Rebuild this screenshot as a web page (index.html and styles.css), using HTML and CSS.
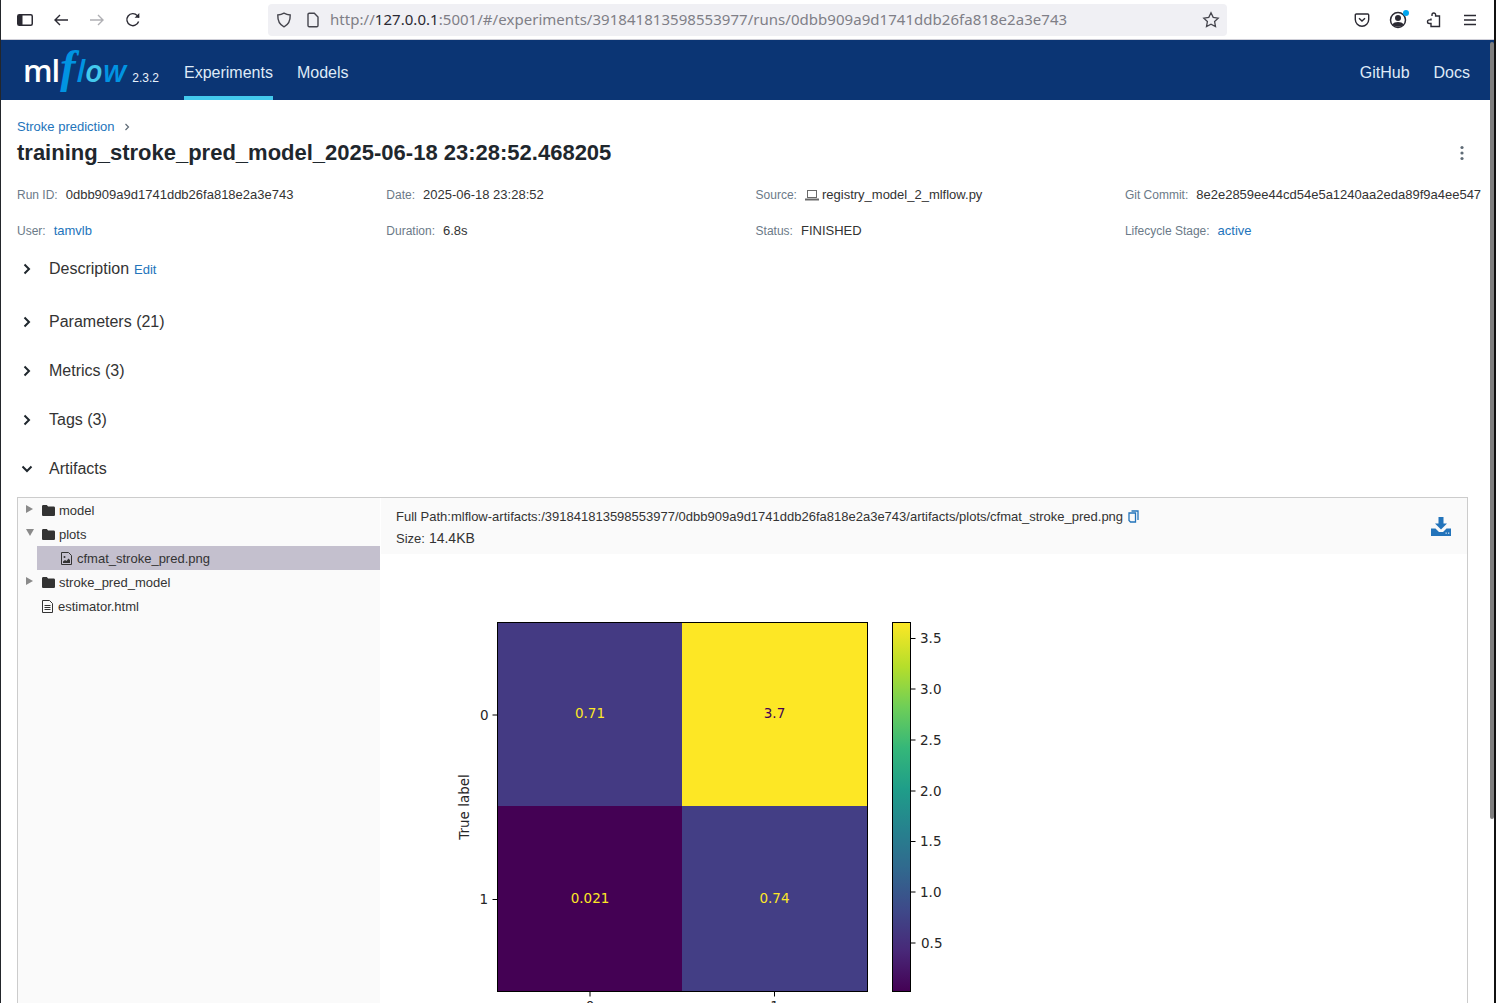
FILE: index.html
```html
<!DOCTYPE html>
<html lang="en">
  <head>
    <meta charset="UTF-8" />
    <title>MLflow</title>
    <link rel="stylesheet" href="styles.css">
  </head>
  <body>
    <div class="browser-bar">
      <div class="tool-btn">
        <svg width="16" height="16" viewBox="0 0 16 16" fill="none" stroke="#2b2a33" stroke-width="1.5"><rect x="0.75" y="2.75" width="14.5" height="10.5" rx="1.5"/><rect x="1" y="3" width="4.5" height="10" fill="#2b2a33" stroke="none"/></svg>
      </div>
      <div class="tool-btn">
        <svg width="16" height="16" viewBox="0 0 16 16" fill="none" stroke="#2b2a33" stroke-width="1.4"><path d="M15 8H2M7 3L2 8l5 5"/></svg>
      </div>
      <div class="tool-btn">
        <svg width="16" height="16" viewBox="0 0 16 16" fill="none" stroke="#b0b0b4" stroke-width="1.4"><path d="M1 8h13M9 3l5 5-5 5"/></svg>
      </div>
      <div class="tool-btn">
        <svg width="16" height="16" viewBox="0 0 16 16" fill="none" stroke="#2b2a33" stroke-width="1.4"><path d="M13.6 9.5A6 6 0 1 1 12.3 3.6L14 5.4"/><path d="M14.3 1v4.7H9.6" stroke="none" fill="#2b2a33"/></svg>
      </div>

      <div class="url-bar">
        <svg class="url-icon" width="16" height="16" viewBox="0 0 16 16" fill="none" stroke="#45454d" stroke-width="1.4"><path d="M8 1.2c2 1.2 4 1.7 6.2 1.8.2 5.5-1.6 9.6-6.2 11.8C3.400 12.600 1.600 8.500 1.800 3 4 2.900 6 2.400 8 1.200z"/></svg>
        <svg class="url-icon page-icon" width="16" height="16" viewBox="0 0 16 16" fill="none" stroke="#45454d" stroke-width="1.4"><path d="M3 2.500c0-.8.500-1.300 1.300-1.300h5L13 5v8.500c0 .8-.500 1.300-1.300 1.300H4.300C3.500 14.800 3 14.300 3 13.500z"/></svg>
        <span class="url-text">http://<b>127.0.0.1</b>:5001/#/experiments/391841813598553977/runs/0dbb909a9d1741ddb26fa818e2a3e743</span>
        <svg class="star-icon" width="18" height="18" viewBox="0 0 18 18" fill="none" stroke="#45454d" stroke-width="1.3"><path d="M9 1.800l2.200 4.600 5 .7-3.600 3.500.9 5L9 13.200l-4.500 2.400.9-5L1.800 7.100l5-.7z"/></svg>
      </div>

      <div class="tool-right">
        <div class="tool-btn">
          <svg width="16" height="16" viewBox="0 0 16 16" fill="none" stroke="#2b2a33" stroke-width="1.4"><path d="M2.300 2h11.400c.6 0 1 .4 1 1v4.500a6.700 6.700 0 0 1-13.400 0V3c0-.6.400-1 1-1z"/><path d="M5 6.200l3 2.800 3-2.800"/></svg>
        </div>
        <div class="tool-btn account-btn">
          <svg width="18" height="18" viewBox="0 0 18 18" fill="none" stroke="#2b2a33" stroke-width="1.5"><circle cx="9" cy="9" r="7.500"/><circle cx="9" cy="7" r="3" fill="#2b2a33" stroke="none"/><path d="M3.500 13.500c1-1.800 3-2.500 5.500-2.500s4.500.7 5.500 2.500c-1.500 1.500-3.300 2.200-5.500 2.200s-4-.7-5.500-2.200z" fill="#2b2a33" stroke="none"/></svg>
          <span class="account-dot"></span>
        </div>
        <div class="tool-btn">
          <svg width="16" height="16" viewBox="0 0 16 16" fill="none" stroke="#2b2a33" stroke-width="1.4"><path d="M6.500 4V2.800a1.800 1.800 0 0 1 3.600 0V4H14v10.500H5.500v-3H3.800a1.800 1.800 0 0 1 0-3.600h1.700V6.500" transform="translate(-.5 0)"/></svg>
        </div>
        <div class="tool-btn">
          <svg width="16" height="16" viewBox="0 0 16 16" fill="none" stroke="#2b2a33" stroke-width="1.4"><path d="M2 3.500h12M2 8h12M2 12.500h12"/></svg>
        </div>
      </div>
    </div>

    <header class="nav">
      <div class="logo">
        <span class="logo-ml">ml</span><span class="logo-f">f</span><span class="logo-flow">l<i>o</i>w</span>
        <span class="logo-version">2.3.2</span>
      </div>
      <a class="nav-link active">Experiments</a>
      <a class="nav-link">Models</a>
      <div class="nav-right">
        <a class="nav-link">GitHub</a>
        <a class="nav-link">Docs</a>
      </div>
    </header>

    <main class="content">
      <div class="breadcrumb">
        <a class="link">Stroke prediction</a>
        <svg width="6" height="8" viewBox="0 0 6 8" fill="none" stroke="#5f6b76" stroke-width="1.200"><path d="M1.500 1l3 3-3 3"/></svg>
      </div>
      <div class="title-row">
        <h1>training_stroke_pred_model_2025-06-18 23:28:52.468205</h1>
        <svg class="kebab" width="4" height="16" viewBox="0 0 4 16" fill="#5f6b76"><circle cx="2" cy="2.500" r="1.600"/><circle cx="2" cy="8" r="1.600"/><circle cx="2" cy="13.500" r="1.600"/></svg>
      </div>

      <div class="meta-grid">
        <div class="meta-item"><span class="meta-label">Run ID:</span><span>0dbb909a9d1741ddb26fa818e2a3e743</span></div>
        <div class="meta-item"><span class="meta-label">Date:</span><span>2025-06-18 23:28:52</span></div>
        <div class="meta-item">
          <span class="meta-label">Source:</span>
          <svg class="source-icon" width="14" height="12" viewBox="0 0 14 12" fill="none" stroke="#6a6a6a"><rect x="2.500" y="1.500" width="9" height="7"/><path d="M0 10.500h14" stroke-width="2"/></svg>
          <span>registry_model_2_mlflow.py</span>
        </div>
        <div class="meta-item"><span class="meta-label">Git Commit:</span><span>8e2e2859ee44cd54e5a1240aa2eda89f9a4ee547</span></div>
        <div class="meta-item"><span class="meta-label">User:</span><a class="link">tamvlb</a></div>
        <div class="meta-item"><span class="meta-label">Duration:</span><span>6.8s</span></div>
        <div class="meta-item"><span class="meta-label">Status:</span><span>FINISHED</span></div>
        <div class="meta-item"><span class="meta-label">Lifecycle Stage:</span><a class="link">active</a></div>
      </div>

      <div class="section first-section">
        <svg class="chevron" width="8" height="12" viewBox="0 0 8 12" fill="none" stroke="#1f272d" stroke-width="2"><path d="M1.500 1.500L6 6l-4.500 4.500"/></svg>
        <span>Description</span><a class="link edit-link">Edit</a>
      </div>
      <div class="section">
        <svg class="chevron" width="8" height="12" viewBox="0 0 8 12" fill="none" stroke="#1f272d" stroke-width="2"><path d="M1.500 1.500L6 6l-4.500 4.500"/></svg>
        <span>Parameters (21)</span>
      </div>
      <div class="section">
        <svg class="chevron" width="8" height="12" viewBox="0 0 8 12" fill="none" stroke="#1f272d" stroke-width="2"><path d="M1.500 1.500L6 6l-4.500 4.500"/></svg>
        <span>Metrics (3)</span>
      </div>
      <div class="section">
        <svg class="chevron" width="8" height="12" viewBox="0 0 8 12" fill="none" stroke="#1f272d" stroke-width="2"><path d="M1.500 1.500L6 6l-4.500 4.500"/></svg>
        <span>Tags (3)</span>
      </div>
      <div class="section">
        <svg class="chevron chevron-open" width="12" height="8" viewBox="0 0 12 8" fill="none" stroke="#1f272d" stroke-width="2"><path d="M1.500 1.500L6 6l4.500-4.500"/></svg>
        <span>Artifacts</span>
      </div>

      <div class="artifacts">
        <div class="tree">
          <div class="tree-row">
            <span class="tree-arrow"></span>
            <svg class="folder" width="13" height="11" viewBox="0 0 13 11"><path d="M1.300 0h3.500l1.300 1.500h5.600c.7 0 1.300.6 1.300 1.300v6.900c0 .7-.6 1.300-1.300 1.300H1.300C.6 11 0 10.400 0 9.700V1.300C0 .6.600 0 1.300 0z" fill="#333"/></svg>
            <span>model</span>
          </div>
          <div class="tree-row">
            <span class="tree-arrow open"></span>
            <svg class="folder" width="13" height="11" viewBox="0 0 13 11"><path d="M1.300 0h3.500l1.300 1.500h5.600c.7 0 1.300.6 1.300 1.300v6.900c0 .7-.6 1.300-1.300 1.300H1.300C.6 11 0 10.400 0 9.700V1.300C0 .6.600 0 1.300 0z" fill="#333"/></svg>
            <span>plots</span>
          </div>
          <div class="tree-row selected">
            <svg class="file-icon" width="11" height="13" viewBox="0 0 11 13" fill="none" stroke="#333"><path d="M.5.500h7l3 3v9H.5z"/><circle cx="3.500" cy="5" r="1" fill="#333" stroke="none"/><path d="M2 11V9.500l2-1.500 1.500 1 2-2.500L9 8v3z" fill="#333" stroke="none"/></svg>
            <span>cfmat_stroke_pred.png</span>
          </div>
          <div class="tree-row">
            <span class="tree-arrow"></span>
            <svg class="folder" width="13" height="11" viewBox="0 0 13 11"><path d="M1.300 0h3.500l1.300 1.500h5.600c.7 0 1.300.6 1.300 1.300v6.900c0 .7-.6 1.300-1.300 1.300H1.300C.6 11 0 10.400 0 9.700V1.300C0 .6.600 0 1.300 0z" fill="#333"/></svg>
            <span>stroke_pred_model</span>
          </div>
          <div class="tree-row leaf">
            <svg class="file-icon" width="11" height="13" viewBox="0 0 11 13" fill="none" stroke="#333"><path d="M.5.500h7l3 3v9H.5z"/><path d="M2.500 5.500h6M2.500 7.500h6M2.500 9.500h6"/></svg>
            <span>estimator.html</span>
          </div>
        </div>

        <div class="viewer">
          <div class="viewer-head">
            <div class="viewer-info">
              <div class="full-path">
                Full Path:mlflow-artifacts:/391841813598553977/0dbb909a9d1741ddb26fa818e2a3e743/artifacts/plots/cfmat_stroke_pred.png
                <svg width="11" height="13" viewBox="0 0 11 13" fill="none" stroke="#2374bb" stroke-width="1.300"><path d="M3.500 1h6.500v9"/><path d="M1 3h6.500v9H2.500L1 10.500z"/></svg>
              </div>
              <div class="size-row">Size: <span class="size-value">14.4KB</span></div>
            </div>
            <svg class="download" width="20" height="19" viewBox="0 0 20 19" fill="#2374bb"><path d="M7.500 0h5v6.500H16l-6 6-6-6h3.500z"/><path d="M0 11.500h4.500L8 15h4l3.500-3.500H20V19H0z"/><rect x="14.500" y="15.500" width="1.300" height="1.300" fill="#cfe0f0"/><rect x="17" y="15.500" width="1.300" height="1.300" fill="#cfe0f0"/></svg>
          </div>

          <svg class="plot" width="520" height="393" viewBox="0 0 520 393">
            <defs>
              <linearGradient id="viridis" x1="0" y1="1" x2="0" y2="0">
                <stop offset="0" stop-color="#440154"/>
                <stop offset="0.11" stop-color="#482878"/>
                <stop offset="0.22" stop-color="#3e4989"/>
                <stop offset="0.33" stop-color="#31688e"/>
                <stop offset="0.44" stop-color="#26828e"/>
                <stop offset="0.55" stop-color="#1f9e89"/>
                <stop offset="0.66" stop-color="#35b779"/>
                <stop offset="0.77" stop-color="#6ece58"/>
                <stop offset="0.88" stop-color="#b5de2b"/>
                <stop offset="1" stop-color="#fde725"/>
              </linearGradient>
            </defs>

            <rect x="57.500" y="12.500" width="184.500" height="183.500" fill="#443a83"/>
            <rect x="242" y="12.500" width="185.500" height="183.500" fill="#fde725"/>
            <rect x="57.500" y="196" width="184.500" height="185.500" fill="#440154"/>
            <rect x="242" y="196" width="185.500" height="185.500" fill="#433e85"/>
            <rect x="57.500" y="12.500" width="370" height="369" fill="none" stroke="#000"/>

            <g class="plot-text" fill="#fde725" text-anchor="middle">
              <text x="150" y="108">0.71</text>
              <text x="334.500" y="108" fill="#440154">3.7</text>
              <text x="150" y="293">0.021</text>
              <text x="334.500" y="293">0.74</text>
            </g>

            <g stroke="#000">
              <path d="M52.500 105h5M52.500 289.500h5M150 381.500v5M334.500 381.500v5"/>
            </g>
            <g class="plot-text" fill="#262626" text-anchor="end">
              <text x="48.500" y="110">0</text>
              <text x="48" y="294">1</text>
            </g>
            <g class="plot-text" fill="#262626" text-anchor="middle">
              <text x="150" y="401">0</text>
              <text x="334.500" y="401">1</text>
              <text transform="translate(29 197) rotate(-90)">True label</text>
            </g>

            <rect x="452.500" y="12.500" width="18" height="369" fill="url(#viridis)" stroke="#000"/>
            <g stroke="#000">
              <path d="M470.500 28.500h5M470.500 79h5M470.500 130h5M470.500 181h5M470.500 231.500h5M470.500 282h5M470.500 333h5"/>
            </g>
            <g class="plot-text" fill="#262626">
              <text x="480" y="33">3.5</text>
              <text x="480" y="84">3.0</text>
              <text x="480" y="135">2.5</text>
              <text x="480" y="186">2.0</text>
              <text x="480" y="236">1.5</text>
              <text x="480" y="287">1.0</text>
              <text x="481" y="338">0.5</text>
            </g>
          </svg>
        </div>
      </div>
    </main>

    <div class="scroll-thumb"></div>
  </body>
</html>
```

FILE: styles.css
```css
* {
  box-sizing: border-box;
}

html,
body {
  height: 1003px;
  overflow: hidden;
}

body {
  margin: 0;
  background: #fff;
  border-left: 1px solid #23262b;
  border-right: 2px solid #111;
  font-family: "Liberation Sans", Arial, sans-serif;
  font-size: 13px;
  color: #333;
  position: relative;
}

.browser-bar {
  height: 40px;
  display: flex;
  align-items: center;
  padding-left: 6px;
  border-bottom: 1px solid #cfcfd8;
}

.tool-btn {
  width: 36px;
  height: 36px;
  display: flex;
  align-items: center;
  justify-content: center;
  position: relative;
}

.url-bar {
  width: 959px;
  height: 32px;
  margin-left: 117px;
  background: #f0f0f4;
  border-radius: 4px;
  display: flex;
  align-items: center;
  padding: 0 7px 0 8px;
}

.url-icon {
  flex: none;
}

.page-icon {
  margin-left: 13px;
}

.url-text {
  margin: -2px 0 0 9px;
  flex: 1;
  font-family: "Noto Sans", sans-serif;
  font-size: 15px;
  letter-spacing: 0.04px;
  color: #7f7f87;
  white-space: nowrap;
}

.url-text b {
  font-weight: 400;
  color: #2b2a33;
}

.tool-right {
  margin-left: auto;
  display: flex;
  padding-right: 6px;
}

.account-dot {
  position: absolute;
  top: 8px;
  right: 7px;
  width: 6px;
  height: 6px;
  border-radius: 50%;
  background: #00a7f0;
}

.nav {
  height: 60px;
  background: #0b3574;
  display: flex;
  align-items: stretch;
  padding: 0 24px 0 22px;
}

.logo {
  width: 161px;
  display: flex;
  align-items: baseline;
  padding-top: 5px;
  white-space: nowrap;
  line-height: 44px;
}

.logo-ml {
  font-family: "Open Sans", sans-serif;
  font-weight: 600;
  font-size: 31px;
  color: #fff;
  letter-spacing: -1px;
}

.logo-f {
  font-family: "Liberation Serif", serif;
  font-style: italic;
  font-weight: 700;
  font-size: 46px;
  color: #0194e2;
  margin-left: 1px;
}

.logo-flow {
  font-family: "Open Sans", sans-serif;
  font-style: italic;
  font-weight: 600;
  font-size: 31px;
  color: #0194e2;
  margin-left: 1px;
}

.logo-flow i {
  color: #43c9ed;
}

.logo-version {
  margin-left: 6px;
  font-size: 12px;
  color: #e7f1fb;
}

.nav-link {
  display: flex;
  align-items: center;
  font-size: 16px;
  color: #dfeaf7;
  margin-right: 24px;
  border-bottom: 4px solid transparent;
  padding-top: 10px;
}

.nav-link.active {
  border-bottom-color: #43c9ed;
}

.nav-right {
  margin-left: auto;
  display: flex;
}

.nav-right .nav-link:last-child {
  margin-right: 0;
}

.content {
  padding: 19px 0 0 16px;
}

.link {
  color: #2374bb;
}

.breadcrumb {
  display: flex;
  align-items: center;
  gap: 9px;
  height: 15px;
}

.title-row {
  display: flex;
  align-items: center;
  justify-content: space-between;
  padding-right: 30px;
  margin-top: 5px;
  height: 28px;
}

h1 {
  margin: 0;
  font-size: 22px;
  font-weight: 700;
  color: #1f272d;
}

.meta-grid {
  display: grid;
  grid-template-columns: repeat(4, 369.3px);
  grid-auto-rows: 36px;
  margin-top: 17px;
}

.meta-item {
  display: flex;
  align-items: baseline;
  height: 22px;
  line-height: 22px;
  white-space: nowrap;
}

.meta-label {
  font-size: 12px;
  color: #6b7a88;
  margin-right: 8px;
}

.source-icon {
  margin-right: 3px;
  align-self: center;
}

.section {
  display: flex;
  align-items: center;
  height: 24px;
  margin-top: 25px;
  font-size: 16px;
  color: #333;
}

.first-section {
  margin-top: 1px;
}

.section + .section {
  margin-top: 25px;
}

.first-section + .section {
  margin-top: 29px;
}

.chevron {
  margin-left: 6px;
  margin-right: 18px;
}

.chevron-open {
  margin-left: 4px;
  margin-right: 16px;
}

.edit-link {
  font-size: 13px;
  margin-left: 5px;
  padding-top: 1px;
}

.artifacts {
  display: flex;
  width: 1451px;
  height: 506px;
  margin-top: 16px;
  border: 1px solid #ccc;
  border-bottom: none;
}

.tree {
  width: 362px;
  flex: none;
  background: #fafafa;
}

.tree-row {
  height: 24px;
  display: flex;
  align-items: center;
  padding-left: 8px;
  white-space: nowrap;
}

.tree-arrow {
  width: 0;
  height: 0;
  margin-right: 8px;
  margin-top: -3px;
  border-left: 7px solid #8a8a8a;
  border-top: 4px solid transparent;
  border-bottom: 4px solid transparent;
}

.tree-arrow.open {
  margin-right: 7px;
  border-top: 7px solid #8a8a8a;
  border-left: 4px solid transparent;
  border-right: 4px solid transparent;
  border-bottom: none;
}

.folder {
  margin-left: 1px;
  margin-right: 4px;
}

.tree-row.selected {
  margin-left: 19px;
  padding-left: 24px;
  background: #c4c0ce;
}

.tree-row.leaf {
  padding-left: 24px;
}

.file-icon {
  margin-right: 5px;
}

.viewer {
  flex: 1;
  min-width: 0;
}

.viewer-head {
  height: 56px;
  margin-left: 1px;
  background: #fafafa;
  display: flex;
  justify-content: space-between;
  padding: 8px 16px 0 15px;
}

.full-path {
  height: 20px;
  display: flex;
  align-items: center;
  gap: 5px;
  white-space: nowrap;
}

.size-row {
  margin-top: 2px;
  height: 20px;
  display: flex;
  align-items: center;
  gap: 4px;
}

.size-value {
  font-size: 14px;
}

.download {
  margin-top: 11px;
}

.plot {
  display: block;
  margin: 56px 0 0 60px;
}

.plot-text text {
  font-family: "DejaVu Sans", sans-serif;
  font-size: 13.5px;
}

.scroll-thumb {
  position: absolute;
  top: 42px;
  right: 0;
  width: 4px;
  height: 777px;
  background: #7f7f7f;
  border-radius: 2px;
}
```
